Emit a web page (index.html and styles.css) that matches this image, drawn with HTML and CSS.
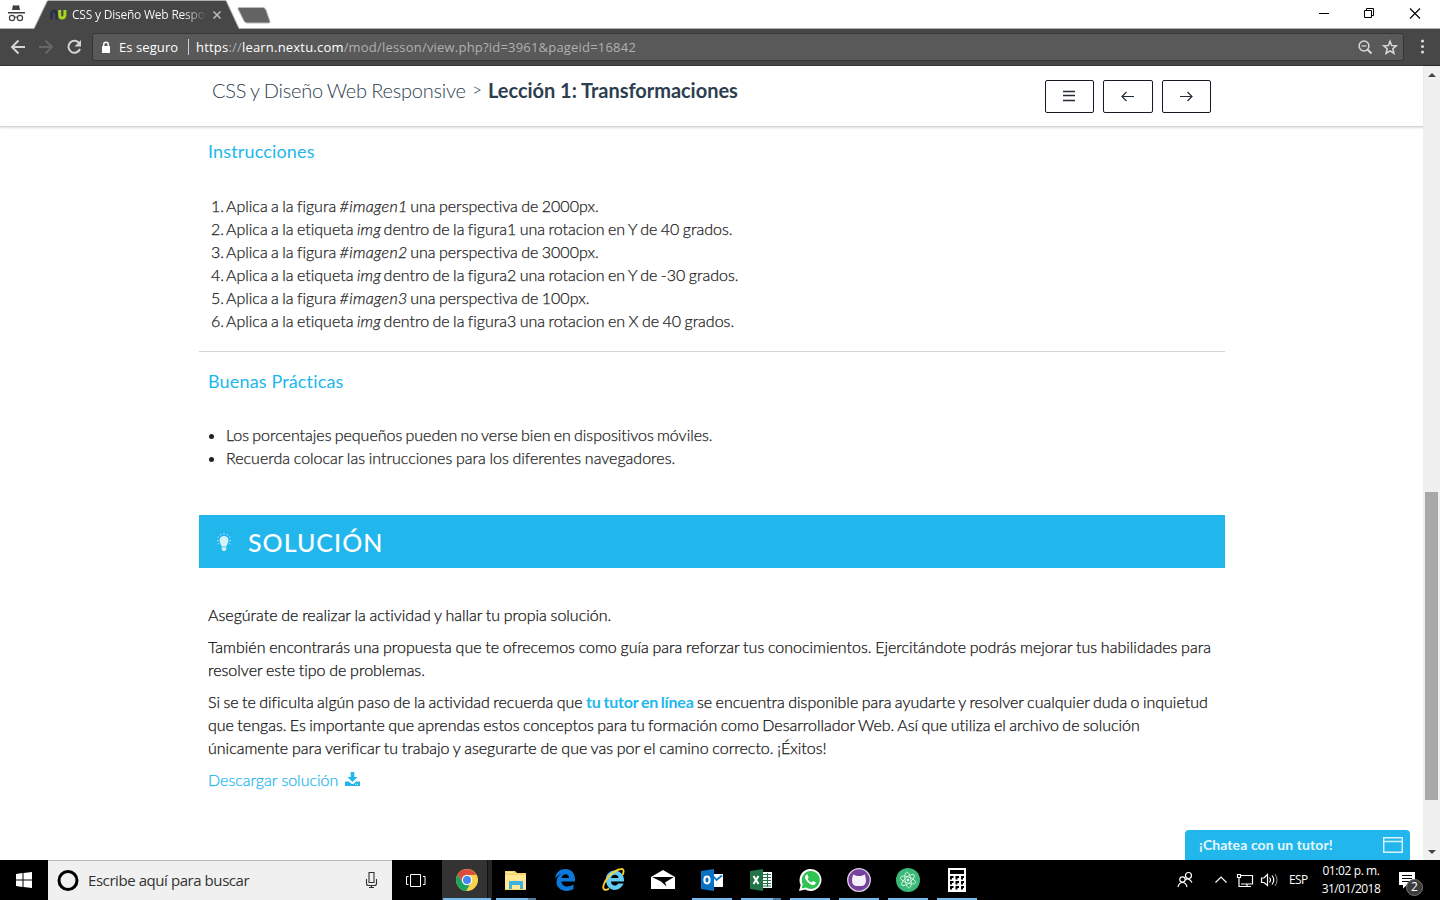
FILE: index.html
```html
<!DOCTYPE html>
<html lang="es">
<head>
<meta charset="utf-8">
<title>CSS y Diseño Web Responsive</title>
<link rel="stylesheet" href="styles.css">
</head>
<body>
<div class="titlebar">
  <svg class="incognito" width="34" height="28" viewBox="0 0 34 28"><path d="M12 10l1-5q3 1 6 0l1 5zM8 12h17v1.500H8z" fill="#404040"/><g fill="none" stroke="#404040" stroke-width="1.200"><circle cx="12" cy="18" r="2.600"/><circle cx="20" cy="18" r="2.600"/><path d="M14.500 17.500q1.500-1 3 0"/></g></svg>
  <div class="tab">
    <svg class="tab-shape" width="240" height="29" viewBox="0 0 240 29"><path d="M0 29L13 1.500Q13.500 .5 15 .5H192L205 28.500V29z" fill="#474747"/><path d="M0 28.500L13 1.500Q13.500 .5 15 .5H191Q192 .5 192.500 1.500L205 28.500" fill="none" stroke="#aeb2af"/><path d="M205 7.500H229Q231 7.500 232 10L236 21.500Q236 23 235 23H213Q211 23 210 21L204 9Q203.500 7.500 205 7.500z" fill="#636363" stroke="#bababa"/></svg>
    <svg class="favicon" width="17" height="12" viewBox="0 0 17 12"><path d="M1.500 10.500V5Q1.500 2 4 2T6.500 5V10.500" fill="none" stroke="#26304b" stroke-width="2.400"/><path d="M9.700 1V6Q9.700 9 12.200 9T14.900 6V1" fill="none" stroke="#a7d71c" stroke-width="3"/></svg>
    <span class="tab-title">CSS y Diseño Web Respo</span>
    <svg class="tab-close" width="8" height="8" viewBox="0 0 8 8"><path d="M.5.5l7 7M7.500.5l-7 7" stroke="#bdbdbd" stroke-width="1.500"/></svg>
  </div>
  <svg class="window-controls" width="138" height="28" viewBox="0 0 138 28"><path d="M17 13.500h10M108 8.500l10 10M118 8.500l-10 10" stroke="#000" fill="none" stroke-width="1.100"/><path d="M62.500 10.500h7v7h-7zM64.500 10V8.500h7v7H70" stroke="#000" fill="none"/></svg>
</div>
<div class="toolbar">
  <svg class="nav-icons" width="92" height="36" viewBox="0 0 92 36"><g fill="none" stroke-width="2"><path d="M25 18H12.500M18.500 11.500L12 18l6.500 6.500" stroke="#d4d4d4"/><path d="M39 18h12.500M45.500 11.500L52 18l-6.500 6.500" stroke="#676767"/><path d="M79.500 14.500A6 6 0 1 0 80 20" stroke="#d4d4d4"/></g><path d="M81 11v6.500h-6.500z" fill="#d4d4d4"/></svg>
  <div class="address">
    <svg width="10" height="13" viewBox="0 0 10 13"><path d="M1 5h8v7H1z" fill="#fff"/><path d="M2.700 5V3.500a2.300 2.300 0 0 1 4.600 0V5" stroke="#fff" stroke-width="1.400" fill="none"/></svg>
    <span class="secure">Es seguro</span>
    <span class="divider"></span>
    <span class="url"><b>https</b>://<b>learn.nextu.com</b>/mod/lesson/view.php?id=3961&amp;pageid=16842</span>
    <svg class="address-icons" width="44" height="18" viewBox="0 0 44 18"><g fill="none" stroke="#d8d8d8"><circle cx="8" cy="8" r="4.900" stroke-width="1.500"/><path d="M5.500 8h5" stroke-width="1.200"/><path d="M11.500 11.500l4 4" stroke-width="2"/><path d="M34 3.200l1.700 4.300 4.600.3-3.500 3 1.100 4.500-3.900-2.500-3.900 2.500 1.100-4.500-3.500-3 4.600-.3z" stroke-width="1.500"/></g></svg>
  </div>
  <svg class="dots" width="36" height="36" viewBox="0 0 36 36"><path d="M18.500 12h.01M18.500 17.500h.01M18.500 23h.01" stroke="#d4d4d4" stroke-width="3.200" stroke-linecap="round"/></svg>
</div>
<div class="viewport">
  <div class="page">
    <header class="lesson-header">
      <div class="crumbs"><span class="course">CSS y Diseño Web Responsive</span><span class="sep">&gt;</span><strong>Lección 1: Transformaciones</strong></div>
      <div class="lesson-nav">
        <button class="w49"><svg width="49" height="33" viewBox="0 0 49 33"><path d="M18 11.500h12M18 15.500h12M18 20.500h12" stroke="#222b37" stroke-width="1.400"/></svg></button>
        <button class="w50"><svg width="50" height="33" viewBox="0 0 50 33"><path d="M31 16.500H19M23.500 12L19 16.500l4.500 4.500" stroke="#222b37" stroke-width="1.200" fill="none"/></svg></button>
        <button class="w49"><svg width="49" height="33" viewBox="0 0 49 33"><path d="M18 16.500h12M25.500 12l4.500 4.500-4.500 4.500" stroke="#222b37" stroke-width="1.200" fill="none"/></svg></button>
      </div>
    </header>
    <main class="content">
      <section class="instructions">
        <h2>Instrucciones</h2>
        <ol>
          <li>Aplica a la figura <em>#imagen1</em> una perspectiva de 2000px.</li>
          <li>Aplica a la etiqueta <em>img</em> dentro de la figura1 una rotacion en Y de 40 grados.</li>
          <li>Aplica a la figura <em>#imagen2</em> una perspectiva de 3000px.</li>
          <li>Aplica a la etiqueta <em>img</em> dentro de la figura2 una rotacion en Y de -30 grados.</li>
          <li>Aplica a la figura <em>#imagen3</em> una perspectiva de 100px.</li>
          <li>Aplica a la etiqueta <em>img</em> dentro de la figura3 una rotacion en X de 40 grados.</li>
        </ol>
      </section>
      <section class="practices">
        <h2>Buenas Prácticas</h2>
        <ul>
          <li class="tight">Los porcentajes pequeños pueden no verse bien en dispositivos móviles.</li>
          <li class="loose">Recuerda colocar las intrucciones para los diferentes navegadores.</li>
        </ul>
      </section>
      <h1 class="solution-bar">
        <svg width="16" height="20" viewBox="0 0 16 20"><path d="M8 4a4.500 4.500 0 0 0-4.500 4.500c0 2.400 1.600 3.500 2 6h5c.4-2.500 2-3.600 2-6A4.500 4.500 0 0 0 8 4zM5.800 15.200h4.400v2.200L9 19H7l-1.200-1.600z" fill="#d5f2fc"/><path d="M8 1v1.500M4.300 2l.7 1.400M11.700 2L11 3.400M1.700 4.700l1.200.9M14.300 4.700l-1.200.9M.8 8.500h1.500M13.700 8.500h1.500M1.700 12l1.200-.8M14.300 12l-1.200-.8" stroke="#a6e2f8"/></svg>
        <span>SOLUCIÓN</span>
      </h1>
      <section class="solution">
        <p class="loose">Asegúrate de realizar la actividad y hallar tu propia solución.</p>
        <p class="loose">También encontrarás una propuesta que te ofrecemos como guía para reforzar tus conocimientos. Ejercitándote podrás mejorar tus habilidades para<br>resolver este tipo de problemas.</p>
        <p>Si se te dificulta algún paso de la actividad recuerda que <a class="tutor">tu tutor en línea</a> se encuentra disponible para ayudarte y resolver cualquier duda o inquietud<br>que tengas. Es importante que aprendas estos conceptos para tu formación como Desarrollador Web. Así que utiliza el archivo de solución<br><span class="loose">únicamente para verificar tu trabajo y asegurarte de que vas por el camino correcto. ¡Éxitos!</span></p>
        <p class="download"><a>Descargar solución</a><svg width="15" height="15" viewBox="0 0 15 15"><path d="M5.700 0h3.600v5h3.200l-5 5-5-5h3.200zM0 9.500h4l2 2q1.500 1 3 0l2-2h4v4.500H0z" fill="#22b7ec"/><path d="M10 12.300h1M12 12.300h1" stroke="#fff"/></svg></p>
      </section>
    </main>
    <div class="chat"><span>¡Chatea con un tutor!</span><svg width="20" height="16" viewBox="0 0 20 16"><path d="M.7.700h18.600v14.600H.7zM.7 4.500h18.600" stroke="#d8f4fe" stroke-width="1.500" fill="none"/></svg></div>
  </div>
  <div class="scrollbar"><i class="arrow up"></i><i class="thumb"></i><i class="arrow down"></i></div>
</div>
<footer class="taskbar">
  <div class="start"><svg width="16" height="16" viewBox="0 0 16 16"><path d="M0 2l6.500-1v6.500H0zM7.500 1L16 0v7.500H7.500zM0 8.500h6.500V15L0 14zM7.500 8.500H16V16l-8.500-1z" fill="#fff"/></svg></div>
  <div class="search">
    <svg width="22" height="22" viewBox="0 0 22 22"><circle cx="11" cy="10.500" r="9" fill="none" stroke="#000" stroke-width="3"/></svg>
    <span>Escribe aquí para buscar</span>
    <svg class="mic" width="13" height="18" viewBox="0 0 13 18"><path d="M4 1.500h5v10H4zM1.500 8v4.500q0 2 2 2h6q2 0 2-2V8M6.500 14.500v2.500M4 16.500h5" fill="none" stroke="#333" stroke-width="1.100"/></svg>
  </div>
  <div class="taskview"><svg width="20" height="14" viewBox="0 0 20 14"><path d="M4.500.5h10v12h-10zM2.500 2.500H.5v8h2M17 2.500h2v8h-2" fill="none" stroke="#fff"/></svg></div>
  <div class="apps">
    <div class="app active stacked"><svg width="24" height="24" viewBox="0 0 24 24"><circle cx="12" cy="12" r="11" fill="#f9d34a"/><path d="M2.500 6.500A11 11 0 0 1 21.500 6.700L12 7l-4.300 7.500z" fill="#dc4b3e"/><path d="M2.500 6.500A11 11 0 0 0 11 23l5-8.500-8.300 0z" fill="#1ca261"/><circle cx="12" cy="12" r="5.200" fill="#fff"/><circle cx="12" cy="12" r="4" fill="#4587f3"/></svg></div>
    <div class="app open stacked-in"><svg width="24" height="24" viewBox="0 0 24 24"><path d="M1 3h10l2 2h9v17H1z" fill="#f6d66f"/><path d="M1 7h21v14H1z" fill="#ffe794"/><path d="M5 13h14v8h-3v-4H8v4H5z" fill="#3fb2e2"/><path d="M3 4.500h6" stroke="#fff3bd"/></svg></div>
    <div class="app"><svg width="24" height="24" viewBox="0 0 24 24"><path d="M2 11C3 4 7 1 12.500 1 18 1 22 5 22 11v2.500H8.500c.5 6 7.500 6 12 3V21C13 25.500 3.500 22 3.500 14c0-4 2-6.500 5-8C5.500 7 3.500 8.500 2 11zM8.500 10h7.500c0-5-6.500-5-7.500 0z" fill="#0b79d8"/></svg></div>
    <div class="app"><svg width="24" height="24" viewBox="0 0 24 24"><path d="M21.500 15.500c-2 5-7 7.500-11.500 6S3.500 15 4 10 9 2.500 13 2.500s9.500 3.500 9 11H9c0 4.500 5.500 5.500 7 2zM9 10h7.500c0-4-6.500-4.500-7.500 0z" fill="#65cdf3"/><path d="M20.500 7c2-4 1-6.500-1.500-6C14 1.500 5 8 2 16c-2 5 .5 7.500 5 4.500" stroke="#ffd22e" stroke-width="1.800" fill="none"/></svg></div>
    <div class="app"><svg width="24" height="24" viewBox="0 0 24 24"><path d="M0 9L12 2l12 7v12H0z" fill="#fff"/><path d="M1 9h22l-9 5.500 1.500 4-5.500-5z" fill="#000"/></svg></div>
    <div class="app open"><svg width="24" height="24" viewBox="0 0 24 24"><path d="M12 6h11v13H12z" fill="#fff"/><path d="M13 8l3.500 4L22 7.500" stroke="#0872c5" stroke-width="1.700" fill="none"/><path d="M1 3l13-2v22L1 21z" fill="#0872c5"/><ellipse cx="7" cy="12" rx="2.600" ry="3.400" fill="none" stroke="#fff" stroke-width="2"/></svg></div>
    <div class="app open stacked-in"><svg width="24" height="24" viewBox="0 0 24 24"><path d="M13 4h10v16H13z" fill="#fff"/><path d="M14 6.500h8M14 9.500h8M14 12.500h8M14 15.500h8M14 18h8M18.500 5v14" stroke="#207447"/><path d="M1 3l13-2v22L1 21z" fill="#207447"/><path d="M4.500 8l5 8M9.500 8l-5 8" stroke="#fff" stroke-width="2"/></svg></div>
    <div class="app open"><svg width="24" height="24" viewBox="0 0 24 24"><path d="M1 23l1.700-6A11 11 0 1 1 7 21.500z" fill="#fff"/><path d="M3.500 20.500L4.800 16A9 9 0 1 1 8 19.500z" fill="#2fc351"/><path d="M8.500 6.500q-2 1-1.500 3.500 2 5 7 7 3.500.5 4-2.500l-3-1.500-1.500 1.500q-3-1-4-3.700l1.200-1.300-1.200-3z" fill="#fff"/></svg></div>
    <div class="app open"><svg width="24" height="24" viewBox="0 0 24 24"><circle cx="12" cy="12" r="11.300" fill="#77429c" stroke="#ded0e9" stroke-width="1.300"/><path d="M6 6.500l4 1.500h4l4-1.500 1 5.500q0 6-5 6h-4q-5 0-5-6z" fill="#f5f3f7"/></svg></div>
    <div class="app open"><svg width="24" height="24" viewBox="0 0 24 24"><circle cx="12" cy="12" r="12" fill="#3bb878"/><g fill="none" stroke="#d3f5dd" stroke-width=".9"><ellipse cx="12" cy="12" rx="3" ry="8" transform="rotate(-10 12 12)"/><ellipse cx="12" cy="12" rx="3" ry="8" transform="rotate(50 12 12)"/><ellipse cx="12" cy="12" rx="3" ry="8" transform="rotate(-70 12 12)"/></g><circle cx="12" cy="12" r="1.300" fill="#fff"/></svg></div>
    <div class="app open"><svg width="24" height="24" viewBox="0 0 24 24"><path d="M3 0h18v24H3z" fill="#fff"/><path d="M5 2h14v4H5zM5 8h3.500v2H7v1.500H5zM10.500 8H14v2h-1.500v1.500h-2zM16 8h3v2h-1v1.500h-2zM5 13h3.500v2H7v1.500H5zM10.500 13H14v2h-1.500v1.500h-2zM16 13h3v2h-1v1.500h-2zM5 18h3.500v2H7v1.500H5zM10.500 18H14v2h-1.500v1.500h-2zM16 18h3v2h-1v1.500h-2z" fill="#000"/></svg></div>
  </div>
  <div class="tray">
    <svg width="110" height="40" viewBox="0 0 110 40"><g fill="none" stroke="#fff" stroke-width="1.200"><circle cx="12.500" cy="15.500" r="3"/><path d="M9.500 20q3-3 6.500 2.500"/><circle cx="6.500" cy="19.500" r="2.700"/><path d="M2 27q1-4.500 4.500-4.500T11 27M39.500 22.500l5.500-5.500 5.500 5.500"/><path d="M65 15.500h11.500v8.500H65M71 24v2.500M66 26.500h9M64.500 14.500v3h-3v-3zM63 17.500v9h3M85.500 18v4.500H88l3.500 3v-11L88 18z"/><path d="M93.500 17.500q2 2.500 0 5M96 15.500q3.500 4.500 0 9"/><path d="M99 14q4 6 0 12" stroke="#777"/></g></svg>
    <span class="lang">ESP</span>
    <span class="clock"><span class="time">01:02 p. m.</span><span class="date">31/01/2018</span></span>
    <div class="notify"><svg width="26" height="29" viewBox="0 0 26 29"><path d="M1 1h16v13H9l-4 3.500V14H1z" fill="#fff"/><path d="M4 4.500h10M4 7.500h10M4 10.500h7" stroke="#000"/><circle cx="16.500" cy="16.500" r="8" fill="#3c3c3c" stroke="#777"/></svg><span class="badge">2</span></div>
  </div>
</footer>
</body>
</html>
```
FILE: styles.css
```css
* { box-sizing: border-box; }
body { margin: 0; width: 1440px; height: 900px; overflow: hidden; display: flex; flex-direction: column; background: #fff; font-family: Lato, "Liberation Sans", sans-serif; font-size: 16px; }
svg { display: block; flex: none; }
span, p, li, h1, h2 { white-space: nowrap; }
.titlebar { height: 29px; display: flex; border-bottom: 1px solid #aeb2af; font-family: "Open Sans", sans-serif; }
.tab { position: relative; width: 240px; height: 29px; display: flex; padding-left: 16px; }
.tab-shape { position: absolute; left: 0; top: 0; }
.favicon, .tab-title, .tab-close { position: relative; }
.favicon { margin-top: 9px; }
.tab-title { margin-left: 5px; width: 133px; overflow: hidden; font-size: 12px; line-height: 29px; letter-spacing: -.22px; color: transparent; background: linear-gradient(90deg, #fff 84%, #555 100%); background-clip: text; -webkit-background-clip: text; }
.tab-close { margin: 11px 0 0 8px; }
.window-controls { margin-left: auto; }
.toolbar { height: 37px; display: flex; background: #474747; border-bottom: 1px solid #292929; font-family: "Open Sans", sans-serif; font-size: 13px; }
.address { width: 1312px; height: 28px; margin-top: 4px; padding: 0 3px 0 8px; display: flex; align-items: center; background: #595959; border: 1px solid #353535; border-radius: 3px; color: #b0b0b0; }
.secure { width: 60px; margin-left: 8px; color: #fff; letter-spacing: .08px; }
.divider { width: 1px; height: 16px; margin: 0 8px 0 9px; background: #d0d0d0; }
.url { margin-left: -1px; letter-spacing: .2px; }
.url b { font-weight: 400; color: #fff; }
.address-icons { margin-left: auto; }
.viewport { height: 794px; display: flex; }
.page { position: relative; width: 1423px; height: 794px; display: flex; flex-direction: column; }
.lesson-header { height: 61px; flex: none; display: flex; justify-content: space-between; padding: 0 212px; border-bottom: 1px solid #d4d4d4; box-shadow: 0 1px 2px #ddd; }
.crumbs { display: flex; padding-top: 11px; font-size: 20px; line-height: 26px; color: #2c3e50; }
.course { width: 260px; font-weight: 300; letter-spacing: -.22px; word-spacing: -.9px; }
.sep { width: 16px; font-size: 17px; font-weight: 300; }
.crumbs strong { font-weight: 700; letter-spacing: -.03px; }
.lesson-nav { display: flex; gap: 9px; padding-top: 14px; }
.lesson-nav button { height: 33px; padding: 0; border: 1px solid #151b25; border-radius: 2px; background: #fff; display: flex; align-items: center; justify-content: center; overflow: hidden; }
.w49 { width: 49px; }
.w50 { width: 50px; }
.content { width: 1026px; margin-left: 199px; line-height: 23px; color: #222; font-weight: 300; font-variant-ligatures: none; }
.content li, .content p { -webkit-text-stroke-width: .25px; word-spacing: -.92px; }
.content .tight { word-spacing: -1.2px; }
.content .loose { word-spacing: -.62px; }
.content h2 { margin: 0; font-size: 18px; font-weight: 400; line-height: 24px; color: #22b7ec; letter-spacing: .15px; }
.content ol, .content ul { margin: 0; padding: 0 0 0 18px; }
.content ol { list-style: none; }
.content ol li::before { content: counter(list-item) "."; display: inline-block; width: 15px; margin-left: -15px; }
.content em { letter-spacing: .35px; margin-right: -1px; }
.instructions { height: 225px; padding: 12px 9px 0; border-bottom: 1px solid #d4d4d4; }
.instructions ol { padding-top: 31px; counter-reset: list-item; }
.practices { height: 163px; padding: 17px 9px 0; }
.practices ul { padding-top: 30px; }
.solution-bar { height: 53px; margin: 0; padding-left: 17px; display: flex; align-items: center; gap: 16px; background: #22b7ec; color: #fff; font-size: 25px; font-weight: 500; letter-spacing: 1px; }
.solution-bar span { padding-top: 1px; }
.solution { padding: 35px 9px 0; color: #111; }
.solution p { margin: 0 0 9px; }
.solution a { color: #22b7ec; }
.solution .tutor { font-weight: 700; letter-spacing: -.2px; -webkit-text-stroke-width: 0; }
.content .download { display: flex; gap: 7px; word-spacing: 0; }
.download svg { margin-top: 4px; }
.chat { position: absolute; left: 1185px; bottom: 0; width: 225px; height: 30px; padding: 0 7px 0 14px; display: flex; align-items: center; justify-content: space-between; border-radius: 4px 4px 0 0; background: #22b7ec; color: #e4f7fe; font-size: 14px; font-weight: 700; letter-spacing: .1px; }
.chat span { padding-bottom: 2px; }
.scrollbar { width: 17px; height: 794px; padding: 7px 0 6px; background: #f0f0f0; display: flex; flex-direction: column; align-items: center; }
.arrow { width: 0; height: 0; border: 4px solid transparent; }
.up { border-top: 0; border-bottom-color: #444; }
.down { border-bottom: 0; border-top-color: #444; margin-top: auto; }
.thumb { width: 13px; height: 308px; margin-top: 415px; background: #a8a8a8; }
.taskbar { height: 40px; flex: none; display: flex; background: #000; color: #fff; font-family: "Open Sans", sans-serif; }
.start { width: 48px; display: flex; align-items: center; justify-content: center; }
.search { width: 344px; display: flex; align-items: center; padding: 0 14px 0 9px; background: #f0f0f0; border-top: 1px solid #b7b7b7; color: #333; font-size: 15px; letter-spacing: -.43px; }
.search span { margin: 0 auto 0 9px; padding-bottom: 2px; }
.mic { margin-bottom: 2px; }
.taskview { width: 50px; padding: 14px 0 0 14px; }
.apps { display: flex; gap: 1px; }
.app { position: relative; width: 48px; height: 40px; padding-left: 1px; display: flex; align-items: center; justify-content: center; }
.app svg { margin-left: 1px; }
.app::after { content: ""; position: absolute; left: 5px; bottom: 0; width: 40px; height: 2px; }
.open::after { background: #76b9ed; }
.active { background: #333; }
.active::after { left: 1px; width: 48px; background: #76b9ed; }
.stacked::before { content: ""; position: absolute; left: 45px; top: 0; width: 4px; height: 40px; background: #252525; border-left: 1px solid #111; }
.stacked-in::after { background: linear-gradient(90deg, #76b9ed 80%, #537ca0 80%); }
.tray { margin-left: auto; width: 264px; display: flex; }
.lang { width: 22px; margin-left: 3px; font-size: 12px; line-height: 40px; letter-spacing: -.65px; }
.clock { width: 80px; padding-top: 2px; display: flex; flex-direction: column; align-items: center; font-size: 12px; line-height: 18px; letter-spacing: -.5px; }
.time { letter-spacing: -.4px; }
.notify { position: relative; margin: 11px 0 0 7px; }
.badge { position: absolute; left: 13px; top: 7px; font-size: 12px; line-height: 18px; }
```
